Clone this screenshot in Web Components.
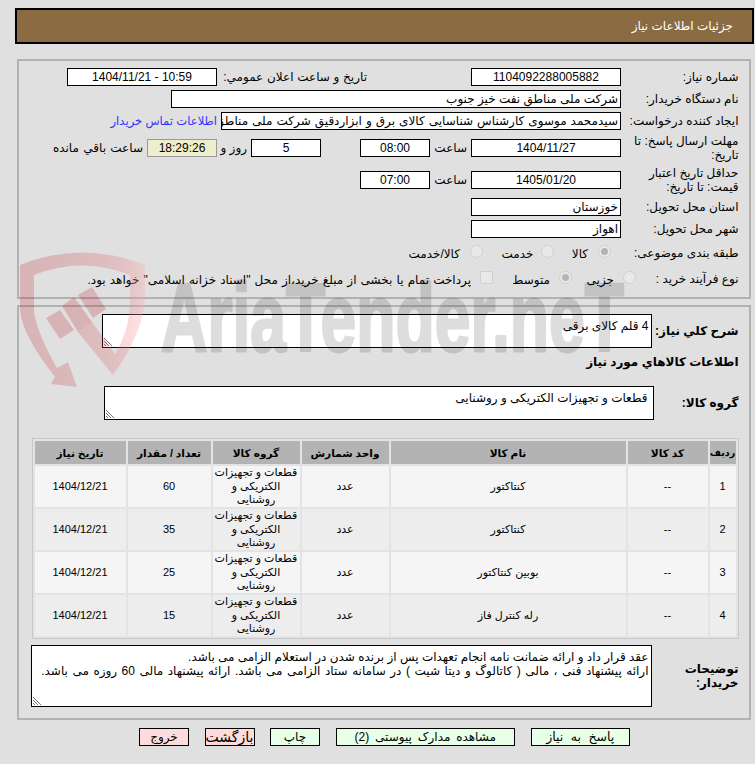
<!DOCTYPE html>
<html lang="fa" dir="rtl">
<head>
<meta charset="utf-8">
<title>جزئیات اطلاعات نیاز</title>
<style>
    html, body { overflow: hidden; }
    body {
        margin: 8px 1px 0 15px;
        height: 756px;
        background: #e0e0e0;
        color: #000;
        font: 12px/14px "Liberation Sans", "DejaVu Sans", sans-serif;
    }
</style>
</head>
<body>
<need-page>
    <title-bar>جزئیات اطلاعات نیاز</title-bar>

    <group-panel style="margin-top:15px;height:240px">
        <field-row style="height:18px">
            <span slot="label">شماره نیاز:</span>
            <ro-box center style="width:150px">1104092288005882</ro-box>
            <span style="width:104px"></span>
            <span style="width:150px;word-spacing:.4px">تاریخ و ساعت اعلان عمومي:</span>
            <ro-box center style="width:150px">10:59 - 1404/11/21</ro-box>
        </field-row>
        <field-row style="height:18px;margin-top:4px">
            <span slot="label">نام دستگاه خریدار:</span>
            <ro-box style="width:450px">شرکت ملی مناطق نفت خیز جنوب</ro-box>
        </field-row>
        <field-row style="height:18px;margin-top:4px">
            <span slot="label">ایجاد کننده درخواست:</span>
            <ro-box style="width:400px;word-spacing:.7px">سیدمحمد موسوی کارشناس شناسایی کالای برق و ابزاردقیق شرکت ملی مناطق نفت خیز جنوب</ro-box>
            <span style="margin-right:4px;color:#3333ff;font-size:11.6px">اطلاعات تماس خریدار</span>
        </field-row>
        <field-row style="height:28px;margin-top:4px">
            <span slot="label">مهلت ارسال پاسخ: تا<br>تاریخ:</span>
            <ro-box center style="width:150px">1404/11/27</ro-box>
            <span style="width:37px;margin-right:4px">ساعت</span>
            <ro-box center style="width:70px">08:00</ro-box>
            <span style="width:39px"></span>
            <ro-box center style="width:70px">5</ro-box>
            <span style="width:30px;margin-right:4px">روز و</span>
            <ro-box center timer style="width:70px">18:29:26</ro-box>
            <span style="margin-right:4px;word-spacing:1px">ساعت باقي مانده</span>
        </field-row>
        <field-row style="height:28px;margin-top:4px">
            <span slot="label">حداقل تاریخ اعتبار<br>قیمت: تا تاریخ:</span>
            <ro-box center style="width:150px">1405/01/20</ro-box>
            <span style="width:37px;margin-right:4px">ساعت</span>
            <ro-box center style="width:70px">07:00</ro-box>
        </field-row>
        <field-row style="height:18px;margin-top:4px">
            <span slot="label">استان محل تحویل:</span>
            <ro-box style="width:150px">خوزستان</ro-box>
        </field-row>
        <field-row style="height:18px;margin-top:4px">
            <span slot="label">شهر محل تحویل:</span>
            <ro-box style="width:150px">اهواز</ro-box>
        </field-row>
        <field-row style="height:18px;margin-top:6px">
            <span slot="label">طبقه بندی موضوعی:</span>
            <choice-item checked style="margin-right:10px;width:57.5px;--gap:10px">کالا</choice-item>
            <choice-item style="width:71px;--gap:7px">خدمت</choice-item>
            <choice-item style="--gap:9.5px">کالا/خدمت</choice-item>
        </field-row>
        <field-row style="height:18px;margin-top:8px;--label-w:102.5px">
            <span slot="label" style="margin-right:0">نوع فرآیند خرید :</span>
            <choice-item style="width:64px;--gap:9px">جزیی</choice-item>
            <choice-item checked style="width:79px;--gap:9px">متوسط</choice-item>
            <choice-item square style="--gap:9px;word-spacing:.8px">پرداخت تمام یا بخشی از مبلغ خرید،از محل "اسناد خزانه اسلامی" خواهد بود.</choice-item>
        </field-row>
    </group-panel>

    <group-panel style="margin-top:6px;height:415px">
        <field-row style="height:34px;--label-w:87px">
            <b slot="label">شرح کلي نیاز:</b>
            <memo-box style="width:549.5px;height:34px">4 قلم کالای برقی</memo-box>
        </field-row>
        <section-title style="margin-top:5px">اطلاعات کالاهاي مورد نیاز</section-title>
        <field-row style="height:34px;margin-top:15px;--label-w:85px">
            <b slot="label">گروه کالا:</b>
            <memo-box style="width:550px;height:34px;--pad:5px">قطعات و تجهیزات الکتریکی و روشنایی</memo-box>
        </field-row>
        <goods-table style="margin-top:18px"></goods-table>
        <field-row style="height:62px;margin-top:6px;--label-w:87px">
            <b slot="label">توضیحات<br>خریدار:</b>
            <memo-box style="width:620.5px;height:62px">عقد قرار داد و ارائه ضمانت نامه انجام تعهدات پس از برنده شدن در استعلام الزامی می باشد.<br><span style="word-spacing:1.2px">ارائه پیشنهاد فنی ، مالی ( کاتالوگ و دیتا شیت ) در سامانه ستاد الزامی می باشد. ارائه پیشنهاد مالی 60 روزه می باشد.</span></memo-box>
        </field-row>
    </group-panel>

    <action-bar>
        <action-button style="width:99.5px;font-size:12.5px;word-spacing:4px">پاسخ به نیاز</action-button>
        <action-button style="width:179.5px;word-spacing:2.5px">مشاهده مدارک پیوستی (2)</action-button>
        <action-button style="width:50px">چاپ</action-button>
        <action-button danger style="width:50px;font-size:14px">بازگشت</action-button>
        <action-button danger style="width:50px">خروج</action-button>
    </action-bar>
</need-page>
<aria-watermark></aria-watermark>

<script>
class AriaWatermark extends HTMLElement {
    connectedCallback() {
        this.attachShadow({ mode: 'open' });
        this.shadowRoot.innerHTML = `
            <style>
                :host { position: absolute; left: 0; top: 0; width: 755px; height: 400px; z-index: 2; direction: ltr; pointer-events: none; }
                svg { display: block; }
            </style>
            <svg width="755" height="400" viewBox="0 0 755 400">
                <defs>
                    <linearGradient id="shield" gradientUnits="userSpaceOnUse" x1="20" x2="145" y1="0" y2="0">
                        <stop offset="0" stop-color="#b4000a" stop-opacity=".2"/>
                        <stop offset=".55" stop-color="#c8282e" stop-opacity=".2"/>
                        <stop offset="1" stop-color="#ffaaaf" stop-opacity=".33"/>
                    </linearGradient>
                </defs>
                <path fill="url(#shield)" d="M20 265 Q82 240 145 265 L145 300 Q142 335 113 375 L78 332 L92 322 L115 354 Q130 330 130 300 L130 275 Q82 256 34 275 L34 312 Q38 335 57 368 L68 362 L77 387 L51 384 L55 377 Q22 335 20 310 Z"/>
                <path fill="#b4000a" fill-opacity=".2" d="M46 318 L60 310 L74 330 L60 339 Z M62 306 L74 297 L92 322 L78 332 Z M78 295 L92 287 L106 309 L93 318 Z"/>
                <text x="161" y="351" textLength="463" lengthAdjust="spacingAndGlyphs" font-family="Liberation Sans" font-weight="700" font-size="97" fill="#000" stroke="#000" stroke-width="3" stroke-linejoin="round" opacity=".13">AriaTender.neT</text>
            </svg>
        `;
    }
}
customElements.define('aria-watermark', AriaWatermark);

class NeedPage extends HTMLElement {
    connectedCallback() {
        this.attachShadow({ mode: 'open' });
        this.shadowRoot.innerHTML = `
            <style>
                :host { display: block; }
            </style>
            <slot></slot>
        `;
    }
}
customElements.define('need-page', NeedPage);

class TitleBar extends HTMLElement {
    connectedCallback() {
        this.attachShadow({ mode: 'open' });
        this.shadowRoot.innerHTML = `
            <style>
                :host {
                    display: flex;
                    align-items: center;
                    box-sizing: border-box;
                    height: 36px;
                    padding-right: 19px;
                    background: #8b6b42;
                    border: 2px solid #000;
                    color: #fff;
                }
            </style>
            <slot></slot>
        `;
    }
}
customElements.define('title-bar', TitleBar);

class GroupPanel extends HTMLElement {
    connectedCallback() {
        this.attachShadow({ mode: 'open' });
        this.shadowRoot.innerHTML = `
            <style>
                :host {
                    display: block;
                    box-sizing: border-box;
                    width: 734px;
                    margin-right: 3px;
                    padding: 7px 10.5px 0 0;
                    border: 2px solid #b2b2b2;
                }
            </style>
            <slot></slot>
        `;
    }
}
customElements.define('group-panel', GroupPanel);

class FieldRow extends HTMLElement {
    connectedCallback() {
        this.attachShadow({ mode: 'open' });
        this.shadowRoot.innerHTML = `
            <style>
                :host { display: flex; align-items: center; white-space: nowrap; }
                .label { flex: none; width: var(--label-w, 117.5px); }
                ::slotted(*) { flex: none; }
            </style>
            <div class="label"><slot name="label"></slot></div>
            <slot></slot>
        `;
    }
}
customElements.define('field-row', FieldRow);

class RoBox extends HTMLElement {
    connectedCallback() {
        this.attachShadow({ mode: 'open' });
        this.shadowRoot.innerHTML = `
            <style>
                :host {
                    display: block;
                    box-sizing: border-box;
                    height: 18px;
                    padding: 0 2px;
                    line-height: 16px;
                    background: #fff;
                    border: 1px solid #000;
                    overflow: hidden;
                    white-space: nowrap;
                }
                :host([center]) { text-align: center; }
                :host([timer]) { background: #eeeecc; border-color: #999; }
            </style>
            <slot></slot>
        `;
    }
}
customElements.define('ro-box', RoBox);

class ChoiceItem extends HTMLElement {
    connectedCallback() {
        this.attachShadow({ mode: 'open' });
        this.shadowRoot.innerHTML = `
            <style>
                :host { display: flex; align-items: center; gap: var(--gap, 8px); }
                .mark {
                    flex: none;
                    box-sizing: border-box;
                    width: 13px;
                    height: 13px;
                    margin-top: -3px;
                    border-radius: 50%;
                    border: 1px solid #cfcfcf;
                    background: #e9e9e9;
                    display: grid;
                    place-items: center;
                }
                :host([checked]) .mark::after {
                    content: "";
                    width: 7px;
                    height: 7px;
                    border-radius: 50%;
                    background: #b4b4b4;
                }
                :host([square]) .mark { border-radius: 2px; }
                .text { margin-top: 1px; }
            </style>
            <span class="mark"></span>
            <span class="text"><slot></slot></span>
        `;
    }
}
customElements.define('choice-item', ChoiceItem);

class SectionTitle extends HTMLElement {
    connectedCallback() {
        this.attachShadow({ mode: 'open' });
        this.shadowRoot.innerHTML = `
            <style>
                :host { display: block; height: 18px; line-height: 18px; font-weight: bold; }
            </style>
            <slot></slot>
        `;
    }
}
customElements.define('section-title', SectionTitle);

class MemoBox extends HTMLElement {
    connectedCallback() {
        this.attachShadow({ mode: 'open' });
        this.shadowRoot.innerHTML = `
            <style>
                :host {
                    display: block;
                    position: relative;
                    box-sizing: border-box;
                    padding: 4px var(--pad, 2px) 0 2px;
                    background: #fff;
                    border: 1px solid #000;
                    overflow: hidden;
                    white-space: nowrap;
                }
                svg { position: absolute; left: 1px; bottom: 1px; }
            </style>
            <slot></slot>
            <svg width="8" height="8" viewBox="0 0 8 8" stroke="#777" stroke-width="1">
                <path d="M0 0 L8 8 M0 3 L5 8 M0 6 L2 8"/>
            </svg>
        `;
    }
}
customElements.define('memo-box', MemoBox);

class GoodsTable extends HTMLElement {
    connectedCallback() {
        const group = 'قطعات و تجهیزات<br>الکتریکی و<br>روشنایی';
        const rows = [
            ['1', '--', 'کنتاکتور', 'عدد', group, '60', '1404/12/21'],
            ['2', '--', 'کنتاکتور', 'عدد', group, '35', '1404/12/21'],
            ['3', '--', 'بوبین کنتاکتور', 'عدد', group, '25', '1404/12/21'],
            ['4', '--', 'رله کنترل فاز', 'عدد', group, '15', '1404/12/21'],
        ];
        const body = rows.map(r => `<tr>${r.map(c => `<td>${c}</td>`).join('')}</tr>`).join('');
        this.attachShadow({ mode: 'open' });
        this.shadowRoot.innerHTML = `
            <style>
                :host { display: block; width: 707px; }
                table {
                    table-layout: fixed;
                    width: 707px;
                    border-collapse: separate;
                    border-spacing: 2px;
                    border: 1px solid #c8c8c8;
                    background: #e3e3e3;
                    font-size: 11px;
                }
                th { height: 23px; padding: 0; background: #b3b3b3; font-weight: bold; font-size: 10.6px; white-space: nowrap; overflow: hidden; }
                th:first-child { font-size: 9.6px; }
                td { height: 41px; padding: 0; text-align: center; line-height: 13.5px; background: #f5f5f5; white-space: nowrap; }
                tr:nth-child(even) td { background: #ededed; }
            </style>
            <table>
                <colgroup>
                    <col style="width:26px"><col style="width:80px"><col style="width:235px"><col style="width:87px">
                    <col style="width:87px"><col style="width:83px"><col style="width:91px">
                </colgroup>
                <thead>
                    <tr><th>ردیف</th><th>کد کالا</th><th>نام کالا</th><th>واحد شمارش</th><th>گروه کالا</th><th>تعداد / مقدار</th><th>تاریخ نیاز</th></tr>
                </thead>
                <tbody>${body}</tbody>
            </table>
        `;
    }
}
customElements.define('goods-table', GoodsTable);

class ActionBar extends HTMLElement {
    connectedCallback() {
        this.attachShadow({ mode: 'open' });
        this.shadowRoot.innerHTML = `
            <style>
                :host { display: flex; gap: 15.5px; margin: 8px 124px 0 0; }
            </style>
            <slot></slot>
        `;
    }
}
customElements.define('action-bar', ActionBar);

class ActionButton extends HTMLElement {
    connectedCallback() {
        this.attachShadow({ mode: 'open' });
        this.shadowRoot.innerHTML = `
            <style>
                :host {
                    display: block;
                    box-sizing: border-box;
                    height: 18px;
                    line-height: 16px;
                    text-align: center;
                    white-space: nowrap;
                    background: #e8ffe8;
                    border: 1px solid #000;
                }
                :host([danger]) { background: #ffdcdc; }
            </style>
            <slot></slot>
        `;
    }
}
customElements.define('action-button', ActionButton);
</script>
</body>
</html>
